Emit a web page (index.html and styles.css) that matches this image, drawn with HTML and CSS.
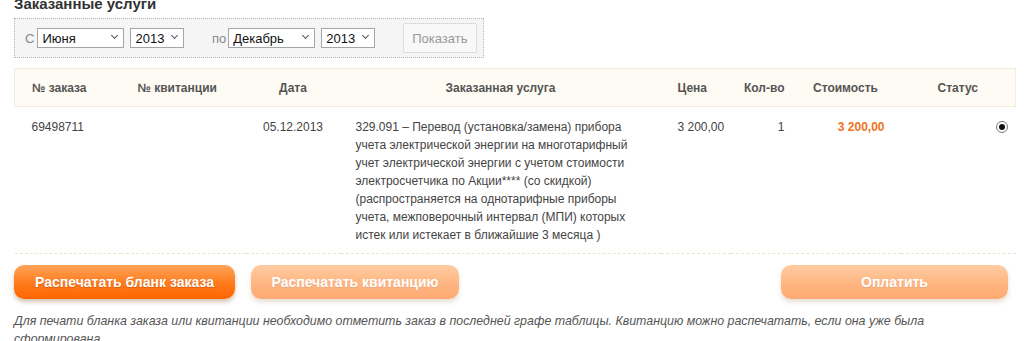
FILE: index.html
```html
<!DOCTYPE html>
<html lang="ru">
<head>
  <meta charset="UTF-8" />
  <title>Заказанные услуги</title>
  <link rel="stylesheet" href="styles.css">
</head>
<body>
  <div class="page">
    <h2>Заказанные услуги</h2>
    <div class="filter">
      <label class="lbl">С</label>
      <span class="sel wide"><select><option>Июня</option></select></span>
      <span class="sel"><select><option>2013</option></select></span>
      <label class="lbl lbl-to">по</label>
      <span class="sel wide"><select><option>Декабрь</option></select></span>
      <span class="sel"><select><option>2013</option></select></span>
      <button class="show-btn">Показать</button>
    </div>

    <table class="orders">
      <colgroup>
        <col style="width:106px"><col style="width:125px"><col style="width:95px"><col style="width:320px">
        <col style="width:70px"><col style="width:60px"><col style="width:110px"><col style="width:115px">
      </colgroup>
      <thead>
        <tr>
          <th class="c-num">№ заказа</th>
          <th class="c-rcpt">№ квитанции</th>
          <th class="c-date">Дата</th>
          <th class="c-srv">Заказанная услуга</th>
          <th class="c-price">Цена</th>
          <th class="c-qty">Кол-во</th>
          <th class="c-sum">Стоимость</th>
          <th class="c-stat">Статус</th>
        </tr>
      </thead>
      <tbody>
        <tr>
          <td class="c-num">69498711</td>
          <td class="c-rcpt"></td>
          <td class="c-date">05.12.2013</td>
          <td class="c-srv">329.091 – Перевод (установка/замена) прибора учета электрической энергии на многотарифный учет электрической энергии с учетом стоимости электросчетчика по Акции**** (со скидкой) (распространяется на однотарифные приборы учета, межповерочный интервал (МПИ) которых истек или истекает в ближайшие 3 месяца )</td>
          <td class="c-price">3 200,00</td>
          <td class="c-qty">1</td>
          <td class="c-sum">3 200,00</td>
          <td class="c-stat"><input type="radio" name="order" checked></td>
        </tr>
      </tbody>
    </table>

    <div class="actions">
      <button class="btn btn-print">Распечатать бланк заказа</button>
      <button class="btn btn-rcpt" disabled>Распечатать квитанцию</button>
      <button class="btn btn-pay" disabled>Оплатить</button>
    </div>

    <p class="note">Для печати бланка заказа или квитанции необходимо отметить заказ в последней графе таблицы. Квитанцию можно распечатать, если она уже была сформирована.</p>
  </div>
</body>
</html>
```

FILE: styles.css
```css
body { margin:0; font-family:"Liberation Sans", Arial, sans-serif; color:#444; background:#fff; }
.page { padding:0 12px 0 14px; width:1001px; }
h2 { margin:-5px 0 5px; font-size:15px; line-height:18px; color:#333; }

.filter { width:452px; height:38px; border:1px dotted #b8b8b8; background:#f5f5f5; display:flex; align-items:center; padding:0 6px 0 10px; box-sizing:content-box; }
.lbl { font-size:13px; color:#888; margin-right:3px; }
.lbl-to { margin-left:22px; margin-right:2px; }
.sel { position:relative; display:inline-block; width:54px; height:20px; margin-right:6px; }
.sel.wide { width:88px; }
.sel select { appearance:none; -webkit-appearance:none; width:100%; height:20px; border:1px solid #a5a5a5; border-radius:0; background:#fff; font:13px "Liberation Sans", Arial, sans-serif; color:#111; padding:0 0 0 4px; box-sizing:border-box; }
.sel::after { content:""; position:absolute; right:7px; top:5px; width:4px; height:4px; border-right:1.5px solid #555; border-bottom:1.5px solid #555; transform:rotate(45deg); pointer-events:none; }
.show-btn { margin-left:22px; width:75px; height:30px; border:1px solid #ddd; border-radius:2px; background:#f8f8f8; color:#999; font:13px "Liberation Sans", Arial, sans-serif; }

.orders { width:1001px; margin-top:10px; border-collapse:collapse; table-layout:fixed; font-size:12px; }
.orders thead tr { background:#fdfbf3; border:1px solid #f1ecdc; }
.orders th { height:37px; padding:0; font-weight:bold; color:#555; }
.orders td { padding:11px 0 9px; line-height:18px; vertical-align:top; color:#444; border-bottom:1px dashed #f0e2cc; }
.c-num { text-align:left; padding-left:17px !important; }
.c-rcpt { text-align:left; padding-left:17px !important; }
.c-date { text-align:center; }
th.c-srv { text-align:center; }
td.c-srv { padding-left:15px !important; padding-right:18px !important; }
.c-price { text-align:left; padding-left:17px !important; }
.c-qty { text-align:right; padding-right:6px !important; }
th.c-sum, th.c-stat { text-align:center; }
td.c-sum { text-align:right; padding-right:16px !important; color:#f07219; font-weight:bold; }
td.c-stat { text-align:right; padding-right:8px !important; }

.c-stat input { appearance:none; -webkit-appearance:none; width:12px; height:12px; margin:3px 0 0; border:1px solid #777; border-radius:50%; background:#fff; position:relative; vertical-align:top; }
.c-stat input:checked::after { content:""; position:absolute; left:2px; top:2px; width:6px; height:6px; border-radius:50%; background:#111; }

.actions { display:flex; gap:16px; margin-top:11px; }
.btn { height:34px; border:0; border-radius:10px; background:linear-gradient(#ffa458, #ff7a1c 55%, #ff6400); box-shadow:0 3px 4px rgba(120,60,0,.3); color:#fff; font:bold 14px "Liberation Sans", Arial, sans-serif; text-shadow:0 1px 1px rgba(140,50,0,.35); }
.btn:disabled { opacity:.55; }
.btn-print { width:221px; }
.btn-rcpt { width:208px; }
.btn-pay { width:227px; margin-left:auto; margin-right:7px; }

.note { margin:13px 0 0; max-width:970px; font-size:12.4px; line-height:18px; font-style:italic; color:#555; }
```
